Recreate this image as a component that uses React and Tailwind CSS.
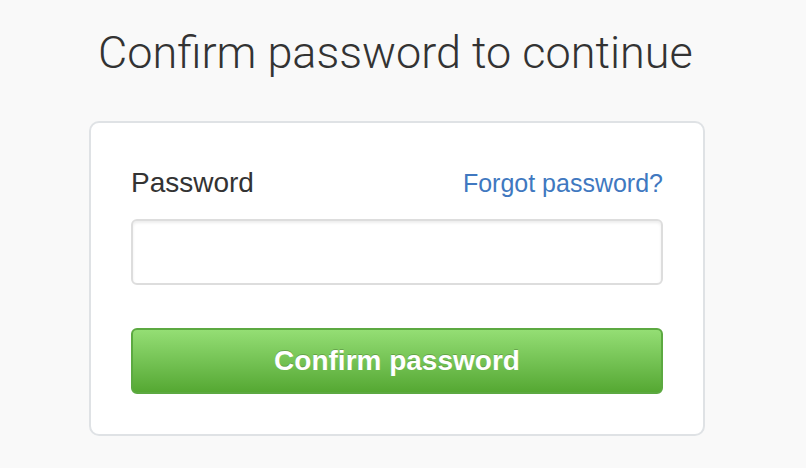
import React from 'react'

function App() {
  return (
    <div className="min-h-[468px] w-full bg-[#f9f9f9] pl-[89px] pt-[22px]" style={{ fontFamily: '"Liberation Sans", Arial, sans-serif' }}>
      <div className="w-[616px]">
        <h1 className="whitespace-nowrap pl-[9px] text-[45px] font-light leading-[62px] text-[#333] font-['Roboto',sans-serif]">
          Confirm password to continue
        </h1>

        <div className="mt-[37px] rounded-[10px] border-2 border-[#dfe2e5] bg-white px-[40px] pt-[39px] pb-[40px]">
          <div className="flex items-baseline justify-between">
            <label className="text-[28px] leading-[42px] text-[#333]">Password</label>
            <a href="#" className="text-[25px] leading-[42px] text-[#4078c0]">Forgot password?</a>
          </div>

          <input
            type="password"
            className="mt-[15px] block h-[66px] w-full rounded-[6px] border-2 border-[#dddddd] bg-white px-4 shadow-[inset_0_2px_3px_rgba(0,0,0,0.075)] outline-none"
          />

          <button className="mt-[43px] flex h-[66px] w-full items-center justify-center rounded-[6px] border-2 border-[#5ca941] bg-gradient-to-b from-[#94de74] to-[#55a832] text-[28px] font-bold text-white [text-shadow:0_-1px_0_rgba(0,0,0,0.2)]">
            Confirm password
          </button>
        </div>
      </div>
    </div>
  )
}

export default App
